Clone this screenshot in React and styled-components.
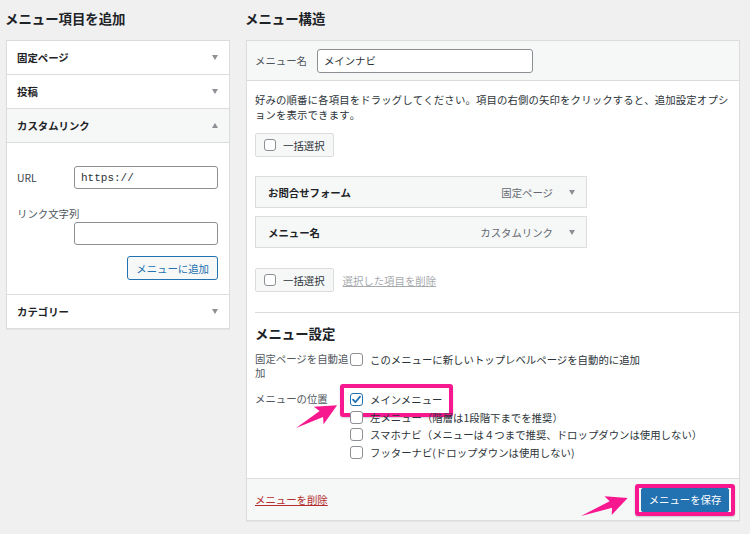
import styled, { createGlobalStyle } from "styled-components";

const GlobalStyle = createGlobalStyle`
  body {
    margin: 0;
    background: #f0f0f1;
    font-family: "Noto Sans CJK JP", "Noto Sans", sans-serif;
    font-size: 10.4px;
    color: #1d2327;
  }
`;

const Page = styled.div`
  display: flex;
  gap: 16px;
  padding: 0 10px 0 6px;
  width: 750px;
  height: 534px;
  box-sizing: border-box;
`;

const Column = styled.div`
  display: flex;
  flex-direction: column;
  min-width: 0;
  width: ${(p) => (p.$w ? p.$w + "px" : "auto")};
  flex: ${(p) => (p.$w ? "none" : 1)};
`;

const Title = styled.h2`
  margin: 0 0 0 -1px;
  height: 40px;
  padding-bottom: 4px;
  box-sizing: border-box;
  display: flex;
  align-items: center;
  font-size: 13.4px;
  font-weight: 700;
`;

const Box = styled.div`
  position: relative;
  background: #fff;
  border: 1px solid #dcdcde;
  box-shadow: 0 1px 1px rgba(0, 0, 0, 0.04);
`;

const AccHead = styled.div`
  height: 33px;
  display: flex;
  align-items: center;
  justify-content: space-between;
  padding: 0 11px 0 10px;
  font-weight: 700;
  background: ${(p) => (p.$open ? "#f6f7f7" : "#fff")};
  border-bottom: ${(p) => (p.$last ? "none" : "1px solid #dcdcde")};
`;

const Tri = styled.span`
  width: 0;
  height: 0;
  border-left: 3.5px solid transparent;
  border-right: 3.5px solid transparent;
  ${(p) =>
    p.$up
      ? "border-bottom: 5px solid #8c8f94;"
      : "border-top: 5px solid #8c8f94;"}
`;

const AccBody = styled.div`
  padding: 23px 11px 14px 10px;
  border-bottom: 1px solid #dcdcde;
  display: flex;
  flex-direction: column;
`;

const Field = styled.div`
  display: flex;
  align-items: center;
  margin-top: ${(p) => p.$mt || 0}px;
`;

const FieldLabel = styled.label`
  width: 57px;
  color: #3c434a;
  flex: none;
`;

const StackLabel = styled.label`
  margin-top: 18px;
  color: #50575e;
  line-height: 14px;
`;

const Input = styled.div`
  flex: ${(p) => (p.$w ? "none" : 1)};
  width: ${(p) => (p.$w ? p.$w + "px" : "auto")};
  height: ${(p) => p.$h || 23}px;
  margin-left: ${(p) => p.$ml || 0}px;
  box-sizing: border-box;
  border: 1px solid #8c8f94;
  border-radius: 3px;
  background: #fff;
  display: flex;
  align-items: center;
  padding: 0 6px;
  font-family: ${(p) =>
    p.$mono ? '"Liberation Mono", monospace' : "inherit"};
  font-size: ${(p) => (p.$mono ? "11px" : "10.4px")};
  color: #2c3338;
`;

const Right = styled.div`
  display: flex;
  justify-content: flex-end;
  margin-top: 11px;
`;

const SecondaryButton = styled.button`
  height: 24px;
  padding: 0 8px;
  border: 1px solid #2271b1;
  border-radius: 3px;
  background: #f6f7f7;
  color: #2271b1;
  font-family: inherit;
  font-size: 10.4px;
`;

const HeaderBar = styled.div`
  height: 39px;
  display: flex;
  align-items: center;
  padding: 0 8px;
  background: #f6f7f7;
  border-bottom: 1px solid #dcdcde;
  color: #50575e;
`;

const Body = styled.div`
  padding: 11px 8px 17px;
`;

const Intro = styled.p`
  margin: 0;
  line-height: 15px;
  font-kerning: none;
  letter-spacing: 0.13px;
  color: #2c3338;
  white-space: nowrap;
  overflow: hidden;
`;

const BulkRow = styled.div`
  display: flex;
  align-items: center;
  margin-top: ${(p) => p.$mt}px;
`;

const BulkButton = styled.div`
  height: 24px;
  box-sizing: border-box;
  display: flex;
  align-items: center;
  gap: 7px;
  padding: 0 8px;
  background: #f6f7f7;
  border: 1px solid #dcdcde;
  border-radius: 2px;
  color: #2c3338;
`;

const Box13 = styled.span`
  width: ${(p) => p.$size || 13}px;
  height: ${(p) => p.$size || 13}px;
  box-sizing: border-box;
  border: 1px solid ${(p) => (p.$checked ? "#2271b1" : "#8c8f94")};
  border-radius: 3px;
  background: #fff;
  display: inline-flex;
  align-items: center;
  justify-content: center;
  flex: none;
`;

const DisabledLink = styled.span`
  margin-left: 9px;
  color: #a7aaad;
  text-decoration: underline;
`;

const ItemList = styled.div`
  display: flex;
  flex-direction: column;
  gap: 8px;
  margin-top: 19px;
`;

const ItemBar = styled.div`
  width: 332px;
  height: 32px;
  box-sizing: border-box;
  display: flex;
  align-items: center;
  padding: 0 11px 0 12px;
  background: #f6f7f7;
  border: 1px solid #dcdcde;
`;

const ItemTitle = styled.span`
  flex: 1;
  font-weight: 700;
`;

const ItemType = styled.span`
  color: #646970;
  margin-right: 16px;
`;

const Settings = styled.div`
  margin-top: 20px;
  margin-right: -8px;
  border-top: 1px solid #dcdcde;
  padding-top: 10px;
`;

const SettingsHead = styled.h3`
  margin: 0 0 9px;
  font-size: 13.4px;
  line-height: 20px;
  font-weight: 700;
`;

const SettingRow = styled.div`
  display: grid;
  grid-template-columns: 95px 1fr;
  margin-bottom: ${(p) => p.$mb || 0}px;
`;

const SettingLabel = styled.div`
  color: #50575e;
  line-height: 14px;
  padding-top: ${(p) => p.$pt || 0}px;
`;

const Options = styled.div`
  display: flex;
  flex-direction: column;
`;

const Option = styled.div`
  position: relative;
  display: flex;
  align-items: center;
  gap: 7px;
  height: ${(p) => p.$h || 17.5}px;
  align-self: flex-start;
  color: #2c3338;
`;

const Highlight = styled.span`
  position: absolute;
  left: -10px;
  right: -11px;
  top: -7px;
  bottom: -8.5px;
  border: 4px solid #f7178e;
  border-radius: 3px;
  box-shadow: 0 1px 2px rgba(0, 0, 0, 0.2);
  pointer-events: none;
`;

const Footer = styled.div`
  height: 41px;
  display: flex;
  align-items: center;
  justify-content: space-between;
  padding: 0 4px 0 8px;
  background: #f6f7f7;
  border-top: 1px solid #dcdcde;
`;

const DeleteLink = styled.span`
  color: #b32d2e;
  text-decoration: underline;
`;

const PinkFrame = styled.div`
  border: 4px solid #f7178e;
  border-radius: 3px;
  padding: 0 2px;
  box-shadow: 0 1px 2px rgba(0, 0, 0, 0.2);
`;

const PrimaryButton = styled.button`
  width: 88px;
  height: 24px;
  border: 1px solid #2271b1;
  border-radius: 2px;
  background: #2271b1;
  color: #fff;
  font-family: inherit;
  font-size: 10.4px;
  padding: 0;
`;

const ArrowSvg = styled.svg`
  position: absolute;
  left: ${(p) => p.$x}px;
  top: ${(p) => p.$y}px;
  overflow: visible;
  pointer-events: none;
`;

const Check = () => (
  <svg width="11" height="11" viewBox="0 0 11 11">
    <path
      d="M2 5.6 L4.4 8.2 L9 2.6"
      fill="none"
      stroke="#2271b1"
      strokeWidth="1.8"
      strokeLinecap="round"
      strokeLinejoin="round"
    />
  </svg>
);

const Arrow = ({ x, y, ty, angle, len }) => (
  <ArrowSvg $x={x} $y={y} width="60" height="40">
    <g transform={`translate(5,${ty}) rotate(${angle})`}>
      <polygon
        points={`0,0 ${len - 18},-3.5 ${len - 21},-10 ${len},0 ${len - 21},10 ${len - 18},3.5`}
        fill="#f7178e"
      />
    </g>
  </ArrowSvg>
);

const Bulk = ({ mt, withLink }) => (
  <BulkRow $mt={mt}>
    <BulkButton>
      <Box13 $size={12} />
      一括選択
    </BulkButton>
    {withLink && <DisabledLink>選択した項目を削除</DisabledLink>}
  </BulkRow>
);

const locations = [
  "左メニュー（階層は1段階下までを推奨）",
  "スマホナビ（メニューは４つまで推奨、ドロップダウンは使用しない）",
  "フッターナビ(ドロップダウンは使用しない)",
];

const App = () => {
  return (
    <>
      <GlobalStyle />
      <Page>
        <Column $w={224}>
          <Title>メニュー項目を追加</Title>
          <Box>
            <AccHead>
              固定ページ
              <Tri />
            </AccHead>
            <AccHead>
              投稿
              <Tri />
            </AccHead>
            <AccHead $open>
              カスタムリンク
              <Tri $up />
            </AccHead>
            <AccBody>
              <Field>
                <FieldLabel>URL</FieldLabel>
                <Input $mono>https://</Input>
              </Field>
              <StackLabel>リンク文字列</StackLabel>
              <Field $mt={1}>
                <Input $ml={57} />
              </Field>
              <Right>
                <SecondaryButton>メニューに追加</SecondaryButton>
              </Right>
            </AccBody>
            <AccHead $last>
              カテゴリー
              <Tri />
            </AccHead>
          </Box>
        </Column>

        <Column>
          <Title>メニュー構造</Title>
          <Box>
            <HeaderBar>
              メニュー名
              <Input $w={216} $ml={10} $h={24}>
                メインナビ
              </Input>
            </HeaderBar>
            <Body>
              <Intro>
                好みの順番に各項目をドラッグしてください。項目の右側の矢印をクリックすると、追加設定オプシ
                <br />
                ョンを表示できます。
              </Intro>
              <Bulk mt={11} />
              <ItemList>
                <ItemBar>
                  <ItemTitle>お問合せフォーム</ItemTitle>
                  <ItemType>固定ページ</ItemType>
                  <Tri />
                </ItemBar>
                <ItemBar>
                  <ItemTitle>メニュー名</ItemTitle>
                  <ItemType>カスタムリンク</ItemType>
                  <Tri />
                </ItemBar>
              </ItemList>
              <Bulk mt={20} withLink />
              <Settings>
                <SettingsHead>メニュー設定</SettingsHead>
                <SettingRow $mb={11}>
                  <SettingLabel>固定ページを自動追加</SettingLabel>
                  <Options>
                    <Option $h={14}>
                      <Box13 />
                      このメニューに新しいトップレベルページを自動的に追加
                    </Option>
                  </Options>
                </SettingRow>
                <SettingRow>
                  <SettingLabel $pt={1}>メニューの位置</SettingLabel>
                  <Options>
                    <Option>
                      <Box13 $checked>
                        <Check />
                      </Box13>
                      メインメニュー
                      <Highlight />
                    </Option>
                    {locations.map((t) => (
                      <Option key={t}>
                        <Box13 />
                        {t}
                      </Option>
                    ))}
                  </Options>
                </SettingRow>
              </Settings>
            </Body>
            <Footer>
              <DeleteLink>メニューを削除</DeleteLink>
              <PinkFrame>
                <PrimaryButton>メニューを保存</PrimaryButton>
              </PinkFrame>
            </Footer>
            <Arrow x={44} y={360} ty={27} angle={-29} len={47} />
            <Arrow x={329} y={450} ty={25} angle={-21} len={50} />
          </Box>
        </Column>
      </Page>
    </>
  );
};

export default App;
